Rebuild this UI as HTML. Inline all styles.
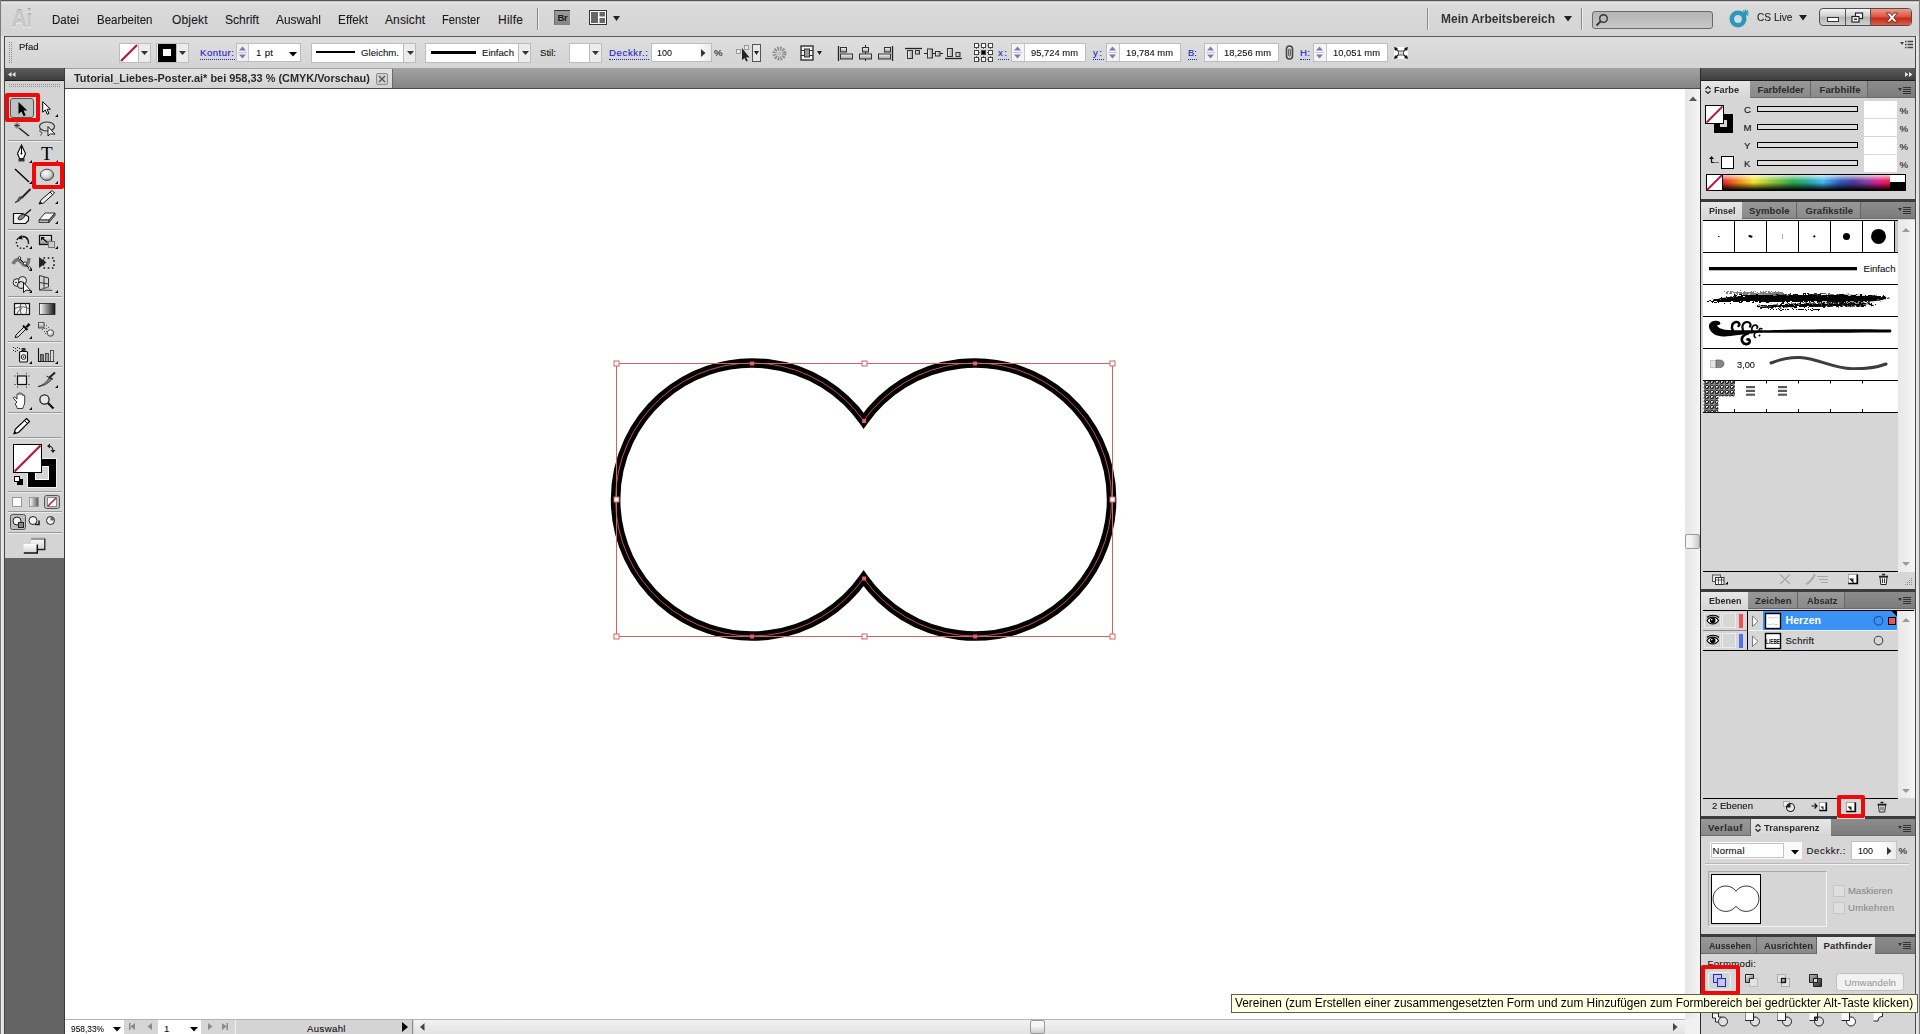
<!DOCTYPE html>
<html lang="de">
<head>
<meta charset="utf-8">
<title>Tutorial_Liebes-Poster.ai</title>
<style>
html,body{margin:0;padding:0}
body{width:1920px;height:1034px;position:relative;overflow:hidden;background:#d6d6d6;font-family:"Liberation Sans",sans-serif;font-size:11px;color:#111}
.a{position:absolute}
.t{position:absolute;white-space:nowrap;line-height:1;-webkit-text-stroke:.1px}
.t[style*="bold"]{-webkit-text-stroke:0}
svg{position:absolute;overflow:visible}
.menu .t{font-size:12.5px;top:14px;color:#1a1a1a}
.lbl{color:#2020c8;border-bottom:1px dotted #2020c8;padding-bottom:2px}
.inp{position:absolute;background:#fff;border:1px solid #bdbdbd;box-sizing:border-box}
.tab{position:absolute;font-weight:bold;font-size:10.5px;color:#2a2a2a;box-sizing:border-box}
.tabon{background:linear-gradient(#e6e6e6,#d6d6d6)}
.taboff{background:linear-gradient(#989898,#8a8a8a);border-right:1px solid #666;border-bottom:1px solid #6c6c6c}
.tabbar{position:absolute;background:linear-gradient(#8c8c8c,#7c7c7c);border-bottom:1px solid #6c6c6c;box-sizing:border-box}
.band{position:absolute;background:#3c3c3c}
.hl{position:absolute;z-index:5;border:4px solid #ee0a0a;border-radius:2px;box-sizing:border-box}
</style>
</head>
<body>
<div class="a" style="left:0;top:0;width:1920px;height:1px;background:#555"></div>
<div class="a" style="left:0;top:1px;width:1920px;height:35px;background:linear-gradient(#b8b8b8 0,#e6e6e6 1.500px,#dadada 4px,#d4d4d4)"></div>
<div class="a" style="left:0;top:36px;width:1920px;height:1px;background:#5a5a5a"></div>
<div class="a" style="left:0;top:37px;width:1920px;height:31px;background:linear-gradient(#dedede,#d4d4d4)"></div>
<div class="a" style="left:0;top:36px;width:1px;height:998px;background:#7a7a7a"></div>
<div class="a" style="left:1px;top:36px;width:3px;height:998px;background:linear-gradient(90deg,#ececec,#dcdcdc)"></div>
<div class="a" style="left:4px;top:36px;width:1px;height:998px;background:#484848"></div>
<div class="a" style="left:1915px;top:36px;width:1px;height:998px;background:#484848"></div>
<div class="a" style="left:1916px;top:36px;width:3px;height:998px;background:linear-gradient(90deg,#ececec,#dcdcdc)"></div>
<div class="a" style="left:1919px;top:36px;width:1px;height:998px;background:#7a7a7a"></div>
<div class="a" style="left:0;top:0;width:1px;height:36px;background:#7a7a7a"></div><div class="a" style="left:1919px;top:0;width:1px;height:36px;background:#7a7a7a"></div>

<div class="menu">
<span class="t" style="left:12px;font-size:24px;font-weight:bold;color:#c8c8c8;text-shadow:0 1px 0 #f0f0f0,0 -1px 0 #a6a6a6;transform:scaleX(0.833);transform-origin:0 0;top:7.2px">Ai</span>
<span class="t" style="left:52px;font-size:12px;transform:scaleX(0.964);transform-origin:0 0;top:13.8px">Datei</span>
<span class="t" style="left:97px;font-size:12px;transform:scaleX(0.956);transform-origin:0 0;top:13.8px">Bearbeiten</span>
<span class="t" style="left:172px;font-size:12px;letter-spacing:0.16px;top:13.8px">Objekt</span>
<span class="t" style="left:225px;font-size:12px;transform:scaleX(1.000);transform-origin:0 0;top:13.8px">Schrift</span>
<span class="t" style="left:276px;font-size:12px;transform:scaleX(0.992);transform-origin:0 0;top:13.8px">Auswahl</span>
<span class="t" style="left:338px;font-size:12px;transform:scaleX(0.985);transform-origin:0 0;top:13.8px">Effekt</span>
<span class="t" style="left:385px;font-size:12px;letter-spacing:0.11px;top:13.8px">Ansicht</span>
<span class="t" style="left:442px;font-size:12px;transform:scaleX(0.934);transform-origin:0 0;top:13.8px">Fenster</span>
<span class="t" style="left:498px;font-size:12px;letter-spacing:0.25px;top:13.8px">Hilfe</span>
<div class="a" style="left:537px;top:8px;width:1px;height:22px;background:#8a8a8a"></div>
<div class="a" style="left:538px;top:8px;width:1px;height:22px;background:#ececec"></div>
<div class="a" style="left:554px;top:10px;width:16px;height:15px;background:linear-gradient(#9a9a9a,#848484);border-top:1px solid #333;border-left:1px solid #707070;box-sizing:border-box"></div>
<span class="t" style="left:557.500px;top:12.500px;font-size:9.500px;font-weight:bold;color:#1a1a1a;letter-spacing:-.3px">Br</span>
<svg style="left:589px;top:10px" width="32" height="15" viewBox="0 0 32 15"><rect x="0.500" y="0.500" width="17" height="14" fill="#fff" stroke="#333"/><rect x="2" y="2" width="7" height="11" fill="#666"/><rect x="10.500" y="2" width="5.500" height="4.500" fill="#666"/><rect x="10.500" y="8" width="5.500" height="5" fill="#666"/><path d="M24 6h7l-3.500 5z" fill="#222"/></svg>
<div class="a" style="left:1427px;top:8px;width:1px;height:22px;background:#8a8a8a"></div>
<div class="a" style="left:1428px;top:8px;width:1px;height:22px;background:#ececec"></div>
<span class="t" style="left:1441px;font-size:13px;font-weight:bold;color:#333;transform:scaleX(0.921);transform-origin:0 0;top:12.0px">Mein Arbeitsbereich</span>
<svg style="left:1564px;top:16px" width="8" height="6"><path d="M0 0h8l-4 5.5z" fill="#222"/></svg>
<div class="a" style="left:1581px;top:8px;width:1px;height:22px;background:#8a8a8a"></div>
<div class="a" style="left:1582px;top:8px;width:1px;height:22px;background:#ececec"></div>
<div class="a" style="left:1592px;top:11px;width:121px;height:18px;background:linear-gradient(#b4b4b4,#c8c8c8);border:1px solid #6a6a6a;border-radius:3px;box-sizing:border-box"></div>
<svg style="left:1595px;top:13px" width="14" height="14" viewBox="0 0 14 14"><circle cx="8.5" cy="5.5" r="3.8" fill="none" stroke="#333" stroke-width="1.4"/><path d="M5.8 8.2L1.5 12.5" stroke="#333" stroke-width="1.8"/></svg>
<svg style="left:1729px;top:9px" width="22" height="19" viewBox="0 0 22 19"><circle cx="9" cy="10" r="6.2" fill="none" stroke="#2a97bb" stroke-width="4.6"/><circle cx="9" cy="10" r="2.6" fill="#bfe3ee"/><path d="M16.5 0.5v7M13 4h7M14 1.5l5 5M19 1.5l-5 5" stroke="#2a97bb" stroke-width="1.2"/></svg>
<span class="t" style="left:1757px;font-size:11.500px;color:#222;transform:scaleX(0.881);transform-origin:0 0;top:12.3px">CS Live</span>
<svg style="left:1799px;top:15px" width="8" height="6"><path d="M0 0h8l-4 5.5z" fill="#222"/></svg>
<div class="a" style="left:1819px;top:8px;width:93px;height:18px;border:1px solid #4e4e4e;border-radius:4px;box-sizing:border-box;background:linear-gradient(#f4f4f4,#d0d0d0 45%,#b4b4b4 50%,#d2d2d2);overflow:hidden">
<div class="a" style="left:25px;top:0;width:1px;height:18px;background:#555"></div>
<div class="a" style="left:50px;top:0;width:42px;height:18px;background:linear-gradient(#ee9a8a,#dc5040 45%,#c42a1a 50%,#e06a50);border-left:1px solid #555"></div>
<div class="a" style="left:7px;top:8px;width:10px;height:3px;background:#fff;border:1px solid #333"></div>
<svg style="left:31px;top:3px" width="13" height="11" viewBox="0 0 13 11"><rect x="4.5" y="1" width="7" height="5.5" fill="#fff" stroke="#222" stroke-width="1.2"/><rect x="1" y="4.5" width="7" height="5.5" fill="#fff" stroke="#222" stroke-width="1.2"/><rect x="3" y="6.5" width="3" height="1.5" fill="#333"/></svg>
<svg style="left:65px;top:3px" width="14" height="11" viewBox="0 0 14 11"><path d="M1.5 1h3.5l2 2.6 2-2.6h3.5l-3.7 4.5 3.7 4.5h-3.5l-2-2.6-2 2.6h-3.5l3.7-4.5z" fill="#fff" stroke="#5a2018" stroke-width="0.9"/></svg>
</div>
</div>

<div class="ctl">
<svg style="left:9px;top:42px" width="4" height="22"><defs><pattern id="gd2" width="2" height="2" patternUnits="userSpaceOnUse"><rect width="1" height="1" fill="#8e8e8e"/></pattern></defs><rect width="4" height="22" fill="url(#gd2)"/></svg>
<span class="t" style="left:19px;font-size:9.600px;transform:scaleX(0.987);transform-origin:0 0;top:41.9px">Pfad</span>
<!-- fill swatch -->
<div class="inp" style="left:119px;top:43px;width:32px;height:20px;background:#ececec"></div>
<div class="a" style="left:120px;top:44px;width:18px;height:18px;background:#fff;border-right:1px solid #bdbdbd"></div>
<svg style="left:120px;top:44px" width="18" height="18"><path d="M1 17L17 1" stroke="#c0103c" stroke-width="2.200"/></svg>
<svg style="left:141px;top:51px" width="7" height="4"><path d="M0 0h7l-3.5 4z" fill="#333"/></svg>
<!-- stroke swatch -->
<div class="inp" style="left:156px;top:43px;width:33px;height:20px;background:#ececec"></div>
<div class="a" style="left:158px;top:44px;width:18px;height:18px;background:#000"></div>
<div class="a" style="left:163px;top:49px;width:8px;height:7px;background:#fff"></div>
<div class="a" style="left:176px;top:44px;width:1px;height:18px;background:#bdbdbd"></div>
<svg style="left:179px;top:51px" width="7" height="4"><path d="M0 0h7l-3.5 4z" fill="#333"/></svg>
<span class="t lbl" style="left:200px;font-size:9.600px;letter-spacing:0.51px;top:47.9px">Kontur:</span>
<!-- spinner + 1pt -->
<div class="inp" style="left:236px;top:43px;width:65px;height:19px"></div>
<div class="a" style="left:237px;top:44px;width:11px;height:17px;background:#f0f0f0;border-right:1px solid #c8c8c8"></div>
<svg style="left:239px;top:46px" width="8" height="14"><path d="M0 4.500l3.500-4 3.500 4zM0 8.500h7l-3.500 4z" fill="#7a7abf"/><path d="M-1 6.5h9" stroke="#c8c8c8"/></svg>
<span class="t" style="left:256px;font-size:9.600px;letter-spacing:0.33px;top:47.9px">1 pt</span>
<svg style="left:289px;top:52px" width="8" height="5"><path d="M0 0h8l-4 4.5z" fill="#000"/></svg>
<!-- Gleichm -->
<div class="inp" style="left:311px;top:43px;width:105px;height:20px;background:#ececec"></div>
<div class="a" style="left:312px;top:44px;width:91px;height:18px;background:#fff;border-right:1px solid #bdbdbd"></div>
<div class="a" style="left:316px;top:51px;width:39px;height:2px;background:#000"></div>
<span class="t" style="left:361px;font-size:9.600px;letter-spacing:0.02px;top:47.9px">Gleichm.</span>
<svg style="left:407px;top:51px" width="7" height="4"><path d="M0 0h7l-3.5 4z" fill="#333"/></svg>
<!-- Einfach -->
<div class="inp" style="left:425px;top:43px;width:106px;height:20px;background:#ececec"></div>
<div class="a" style="left:426px;top:44px;width:92px;height:18px;background:#fff;border-right:1px solid #bdbdbd"></div>
<div class="a" style="left:431px;top:51px;width:45px;height:3px;background:#000"></div>
<span class="t" style="left:482px;font-size:9.600px;letter-spacing:0.00px;top:47.9px">Einfach</span>
<svg style="left:522px;top:51px" width="7" height="4"><path d="M0 0h7l-3.5 4z" fill="#333"/></svg>
<span class="t" style="left:540px;font-size:9.600px;letter-spacing:0.00px;top:47.9px">Stil:</span>
<div class="inp" style="left:569px;top:43px;width:33px;height:20px;background:#ececec"></div>
<div class="a" style="left:570px;top:44px;width:19px;height:18px;background:#fff;border-right:1px solid #bdbdbd"></div>
<svg style="left:592px;top:51px" width="7" height="4"><path d="M0 0h7l-3.5 4z" fill="#333"/></svg>
<span class="t lbl" style="left:609px;font-size:9.600px;letter-spacing:0.62px;top:47.9px">Deckkr.:</span>
<!-- 100 -->
<div class="inp" style="left:651px;top:43px;width:61px;height:19px"></div>
<div class="a" style="left:695px;top:44px;width:16px;height:17px;background:linear-gradient(90deg,#fff,#ececec)"></div>
<span class="t" style="left:657px;font-size:9.600px;transform:scaleX(0.937);transform-origin:0 0;top:47.9px">100</span>
<svg style="left:701px;top:49px" width="5" height="8"><path d="M0 0v8l4.5-4z" fill="#333"/></svg>
<span class="t" style="left:714px;font-size:9.600px;letter-spacing:0.47px;top:47.9px">%</span>
<!-- select similar -->
<svg style="left:735px;top:44px" width="27" height="18" viewBox="0 0 27 18"><rect x="1.5" y="5.5" width="4" height="4" fill="#e8e8e8" stroke="#555" stroke-dasharray="1 1"/><rect x="9.500" y="1.500" width="4" height="4" fill="#e8e8e8" stroke="#555" stroke-dasharray="1 1"/><path d="M7 4l7.500 9.500-3.500-.3 1.800 3.600-1.600.8-1.800-3.700-2.400 2.300z" fill="#222"/><rect x="17.5" y="0.5" width="8" height="17" fill="#e8e8e8" stroke="#555"/><path d="M19 7h5l-2.500 4z" fill="#222"/></svg>
<!-- recolor wheel -->
<svg style="left:772px;top:46px" width="15" height="15" viewBox="0 0 15 15"><circle cx="7.500" cy="7.500" r="5" fill="none" stroke="#8e8e8e" stroke-width="4" stroke-dasharray="1.600 1"/><circle cx="7.500" cy="7.500" r="2" fill="#bdbdbd"/></svg>
<!-- doc setup -->
<svg style="left:800px;top:45px" width="26" height="16" viewBox="0 0 26 16"><rect x="1" y="1" width="12" height="14" fill="#f4f4f4" stroke="#333" stroke-width="1.400"/><rect x="4.500" y="4" width="5" height="8" fill="#999" stroke="#333"/><path d="M1 5.500h3M10 5.500h3M1 10.500h3M10 10.500h3" stroke="#333"/><path d="M17 6h5l-2.500 4z" fill="#222"/></svg>
<!-- align icons -->
<svg style="left:837px;top:45px" width="128" height="16" viewBox="0 0 128 16"><defs><linearGradient id="ag" x1="0" y1="0" x2="0" y2="1"><stop offset="0" stop-color="#f6f6f6"/><stop offset="1" stop-color="#9c9c9c"/></linearGradient><linearGradient id="ah" x1="0" y1="0" x2="1" y2="0"><stop offset="0" stop-color="#f6f6f6"/><stop offset="1" stop-color="#9c9c9c"/></linearGradient></defs>
<g stroke="#333" fill="url(#ag)"><path d="M1.500 1v15" stroke="#222" stroke-width="1.300" fill="none"/><rect x="3.500" y="2.500" width="6" height="4.500"/><rect x="3.500" y="9" width="12" height="5"/>
<path d="M28.500 0v16" stroke="#222" fill="none"/><rect x="25.500" y="2.500" width="6" height="4.500"/><rect x="22.500" y="9" width="12" height="5"/>
<path d="M55.500 1v15" stroke="#222" stroke-width="1.300" fill="none"/><rect x="47.500" y="2.500" width="6" height="4.500"/><rect x="41.500" y="9" width="12" height="5"/></g>
<g stroke="#333" fill="url(#ah)"><path d="M68 3.500h17" stroke="#222" stroke-width="1.300" fill="none"/><rect x="70.500" y="5.500" width="5" height="8"/><rect x="78.500" y="5.500" width="4" height="3.500"/>
<path d="M87 8.500h19" stroke="#222" fill="none"/><rect x="90.500" y="4" width="5" height="9"/><rect x="98.500" y="6.500" width="4.500" height="4.500"/>
<path d="M108 13.500h17" stroke="#222" stroke-width="1.300" fill="none"/><rect x="110.500" y="3.500" width="5" height="8"/><rect x="119" y="7.500" width="4" height="4"/></g></svg>
<!-- reference point -->
<svg style="left:974px;top:43px" width="19" height="19" viewBox="0 0 19 19"><g fill="#fff" stroke="#444"><path d="M3 2.500h13M3 9.500h13M3 16.500h13M2.500 3v13M9.500 3v13M16.500 3v13" stroke="#666" stroke-dasharray="1 1" fill="none"/><rect x="0.500" y="0.500" width="4" height="4"/><rect x="7.500" y="0.500" width="4" height="4"/><rect x="14.500" y="0.500" width="4" height="4"/><rect x="0.500" y="7.500" width="4" height="4"/><rect x="7.500" y="7.500" width="4" height="4" fill="#000"/><rect x="14.500" y="7.500" width="4" height="4"/><rect x="0.500" y="14.500" width="4" height="4"/><rect x="7.500" y="14.500" width="4" height="4"/><rect x="14.500" y="14.500" width="4" height="4"/></g></svg>
<span class="t lbl" style="left:998px;font-size:9.600px;letter-spacing:1.53px;top:47.9px">x:</span>
<div class="inp" style="left:1011px;top:43px;width:75px;height:19px"></div>
<div class="a" style="left:1012px;top:44px;width:12px;height:17px;background:#f4f4f4;border-right:1px solid #c8c8c8"></div>
<svg style="left:1014px;top:46px" width="8" height="14"><path d="M0 4.500l3.500-4 3.500 4zM0 8.500h7l-3.500 4z" fill="#7a7abf"/><path d="M-1 6.500h9" stroke="#c8c8c8"/></svg>
<span class="t" style="left:1031px;font-size:9.600px;transform:scaleX(0.979);transform-origin:0 0;top:47.9px">95,724 mm</span>
<span class="t lbl" style="left:1093px;font-size:9.600px;letter-spacing:1.53px;top:47.9px">y:</span>
<div class="inp" style="left:1106px;top:43px;width:75px;height:19px"></div>
<div class="a" style="left:1107px;top:44px;width:12px;height:17px;background:#f4f4f4;border-right:1px solid #c8c8c8"></div>
<svg style="left:1109px;top:46px" width="8" height="14"><path d="M0 4.500l3.500-4 3.500 4zM0 8.500h7l-3.500 4z" fill="#7a7abf"/><path d="M-1 6.500h9" stroke="#c8c8c8"/></svg>
<span class="t" style="left:1126px;font-size:9.600px;transform:scaleX(0.979);transform-origin:0 0;top:47.9px">19,784 mm</span>
<span class="t lbl" style="left:1188px;font-size:9.600px;transform:scaleX(0.991);transform-origin:0 0;top:47.9px">B:</span>
<div class="inp" style="left:1204px;top:43px;width:75px;height:19px"></div>
<div class="a" style="left:1205px;top:44px;width:12px;height:17px;background:#f4f4f4;border-right:1px solid #c8c8c8"></div>
<svg style="left:1207px;top:46px" width="8" height="14"><path d="M0 4.500l3.500-4 3.500 4zM0 8.500h7l-3.500 4z" fill="#7a7abf"/><path d="M-1 6.500h9" stroke="#c8c8c8"/></svg>
<span class="t" style="left:1224px;font-size:9.600px;transform:scaleX(0.979);transform-origin:0 0;top:47.9px">18,256 mm</span>
<svg style="left:1285px;top:45px" width="9" height="15" viewBox="0 0 9 15"><rect x="1.500" y="1" width="6" height="13" rx="3" fill="none" stroke="#444" stroke-width="1.600"/><rect x="3.500" y="4" width="2" height="7" rx="1" fill="#bbb" stroke="#444" stroke-width=".8"/></svg>
<span class="t lbl" style="left:1300px;font-size:9.600px;letter-spacing:0.41px;top:47.9px">H:</span>
<div class="inp" style="left:1313px;top:43px;width:75px;height:19px"></div>
<div class="a" style="left:1314px;top:44px;width:12px;height:17px;background:#f4f4f4;border-right:1px solid #c8c8c8"></div>
<svg style="left:1316px;top:46px" width="8" height="14"><path d="M0 4.500l3.500-4 3.500 4zM0 8.500h7l-3.500 4z" fill="#7a7abf"/><path d="M-1 6.500h9" stroke="#c8c8c8"/></svg>
<span class="t" style="left:1333px;font-size:9.600px;transform:scaleX(0.979);transform-origin:0 0;top:47.9px">10,051 mm</span>
<svg style="left:1394px;top:47px" width="14" height="12" viewBox="0 0 14 12"><rect x="0" y="0" width="14" height="12" fill="#fff"/><rect x="4.500" y="4" width="5" height="4" fill="#ddd" stroke="#555"/><path d="M0 0l4 1-1 1 1.500 1.500-1 1L2 3 1 4zM14 0l-4 1 1 1-1.500 1.500 1 1L12 3l1 1zM0 12l4-1-1-1 1.500-1.500-1-1L2 9 1 8zM14 12l-4-1 1-1-1.500-1.500 1-1L12 9l1-1z" fill="#111"/></svg>
<svg style="left:1900px;top:40px" width="13" height="9" viewBox="0 0 13 9"><path d="M0 2h4l-2 3z" fill="#444"/><path d="M5 1.500h1.500M5 4.500h1.500M5 7.500h1.500" stroke="#444" stroke-width="1.600"/><path d="M7.500 1.500h5.500M7.500 4.500h5.500M7.500 7.500h5.500" stroke="#444" stroke-width="1.400"/></svg>
</div>

<div class="a" style="left:65px;top:68px;width:1635px;height:21px;background:linear-gradient(#a2a2a2,#848484);border-bottom:1px solid #4c4c4c;box-sizing:border-box"></div>
<div class="a" style="left:65px;top:69px;width:328px;height:19px;background:linear-gradient(#e4e4e4,#d2d2d2);border-right:1px solid #6a6a6a;box-sizing:border-box"></div>
<span class="t" style="left:74px;font-size:11.5px;color:#2a2a2a;font-weight:bold;transform:scaleX(0.950);transform-origin:0 0;top:73.0px">Tutorial_Liebes-Poster.ai* bei 958,33 % (CMYK/Vorschau)</span>
<svg style="left:376px;top:73px" width="12" height="12" viewBox="0 0 12 12"><rect x="0.500" y="0.500" width="11" height="11" rx="1.500" fill="#d0d0d0" stroke="#8a8a8a"/><path d="M3 3l6 6M9 3l-6 6" stroke="#555" stroke-width="1.300"/></svg>

<div class="a" style="left:5px;top:68px;width:59px;height:966px;background:#646464"></div>
<div class="a" style="left:64px;top:68px;width:1px;height:966px;background:#3a3a3a"></div>
<div class="a" style="left:5px;top:68px;width:59px;height:12px;background:linear-gradient(#5c5c5c,#3e3e3e)"></div>
<div class="a" style="left:5px;top:80px;width:59px;height:1px;background:#1e1e1e"></div>
<svg style="left:8px;top:72px" width="8" height="5"><path d="M3.500 0v5L0 2.500zM7.500 0v5L4 2.500z" fill="#e4e4e4"/></svg>
<div class="a" style="left:5px;top:81px;width:59px;height:477px;background:#d4d4d4"></div>
<svg style="left:9px;top:84px" width="52" height="4"><defs><pattern id="gd" width="2" height="2" patternUnits="userSpaceOnUse"><rect width="1" height="1" fill="#8e8e8e"/></pattern></defs><rect width="52" height="4" fill="url(#gd)"/></svg>
<svg style="left:5px;top:81px" width="59" height="477" viewBox="5 81 59 477">
<defs>
<linearGradient id="gv" x1="0" y1="0" x2="0" y2="1"><stop offset="0" stop-color="#fafafa"/><stop offset="1" stop-color="#8a8a8a"/></linearGradient>
<linearGradient id="gh" x1="0" y1="0" x2="1" y2="0"><stop offset="0" stop-color="#fff"/><stop offset="1" stop-color="#111"/></linearGradient>
<radialGradient id="gs" cx="0.4" cy="0.35" r="0.7"><stop offset="0" stop-color="#fff"/><stop offset="0.600" stop-color="#d0d0d0"/><stop offset="1" stop-color="#777"/></radialGradient>
</defs>
<!-- separators -->
<g stroke="#9a9a9a"><path d="M8 140.500h54M8 229.500h54M8 296.500h54M8 341.500h54M8 366.500h54M8 412.500h54M8 437.500h54M8 491.500h54M8 511.500h54M8 532.500h54"/></g>
<g stroke="#ececec"><path d="M8 141.500h54M8 230.500h54M8 297.500h54M8 342.500h54M8 367.500h54M8 413.500h54M8 438.500h54M8 492.500h54M8 512.500h54M8 533.500h54"/></g>
<!-- selected tool bg -->
<rect x="10.500" y="98.500" width="23" height="19" rx="2.500" fill="#bcc2c2" stroke="#555"/>
<!-- selection arrow -->
<path d="M18.500 102v12l3-2.600 2.200 4.800 2-.9-2.200-4.700 3.800-.2z" fill="#000"/>
<!-- direct selection -->
<path d="M42.700 101.700v10.500l2.600-2.200 2 4.300 1.700-.800-1.900-4.200 3.300-.200z" fill="#fff" stroke="#000" stroke-width="1"/>
<!-- small triangles -->
<g fill="#000"><path d="M58 114v3h-3zM32 160v3h-3zM58 160v3h-3zM32 181v3h-3zM58 181v3h-3zM58 201v3h-3zM58 221v3h-3zM32 246v3h-3zM58 246v3h-3zM32 268v3h-3zM32 290v3h-3zM58 290v3h-3zM32 336v3h-3zM32 361v3h-3zM58 361v3h-3zM58 385v3h-3zM32 407v3h-3z"/></g>
<!-- magic wand -->
<path d="M19 128l10 8" stroke="#222" stroke-width="1.600"/><path d="M17 122.500v6M14 125.500h6M15 123.500l4 4M19 123.500l-4 4" stroke="#333" stroke-width=".9"/>
<!-- lasso -->
<ellipse cx="47" cy="126.500" rx="7.500" ry="4.500" fill="none" stroke="#333" stroke-width="1.200"/><path d="M41 129c-2 1-1.500 3 0 3s1 2-.5 3.500" fill="none" stroke="#333" stroke-width="1"/><path d="M48 126.500v9.500l2.500-2.200 4.500.4z" fill="#fff" stroke="#000" stroke-width=".9"/>
<!-- pen -->
<path d="M21.500 145l4 8.500-2 5h-4l-2-5z" fill="#fff" stroke="#000" stroke-width="1.100"/><path d="M21.500 147v6" stroke="#000"/><circle cx="21.500" cy="153.500" r="1" fill="#000"/><rect x="18.500" y="158.500" width="6" height="3" fill="#333"/>
<!-- T -->
<text x="46.800" y="160" font-family="Liberation Serif,serif" font-size="19" text-anchor="middle" fill="#000">T</text>
<!-- line -->
<path d="M15 169l14 13" stroke="#000" stroke-width="1.400"/>
<!-- ellipse -->
<ellipse cx="47" cy="174.800" rx="6.600" ry="5.600" fill="url(#gs)" stroke="#444" stroke-width="1"/>
<!-- brush -->
<path d="M30.500 189l-9 9" stroke="#222" stroke-width="1.800"/><path d="M22 197c-1 3-4 5-7 5.500 2.500-1 3-3.500 4.500-5.500z" fill="#666" stroke="#222" stroke-width=".8"/>
<!-- pencil -->
<path d="M52 190.500l2.500 2.500-11 10-4.500 1 2-4z" fill="#f0f0f0" stroke="#111" stroke-width="1"/><path d="M50 192l2.500 2.500" stroke="#111"/><path d="M39 204l1.500-2.500 1.500 1.500z" fill="#111"/>
<!-- blob brush -->
<path d="M13.500 213.500h9l6 3v4l-3 3h-12z" fill="#f2f2f2" stroke="#111" stroke-width="1.200"/><path d="M31 209.500l-7 6" stroke="#111" stroke-width="1.300"/><ellipse cx="21.500" cy="217" rx="4" ry="2" transform="rotate(-35 21.500 217)" fill="#888" stroke="#111" stroke-width=".8"/>
<!-- eraser -->
<path d="M45 213h10l-6 7h-10z" fill="#fafafa" stroke="#222" stroke-width=".9"/><path d="M39 220h10v2.500h-10z" fill="#bbb" stroke="#222" stroke-width=".8"/><path d="M49 220l6-7v2.500l-6 7z" fill="#888" stroke="#222" stroke-width=".8"/>
<!-- rotate -->
<circle cx="22.500" cy="242.500" r="6" fill="none" stroke="#111" stroke-width="1.500" stroke-dasharray="1.500 2"/><path d="M22.500 236.500a6 6 0 0 1 5.800 4.500" fill="none" stroke="#111" stroke-width="1.400"/><path d="M17 238.500l5-3.500.5 4.500z" fill="#111"/>
<!-- scale -->
<rect x="39.500" y="235.500" width="12" height="9" fill="url(#gv)" stroke="#111" stroke-width="1.200"/><rect x="48.500" y="241.500" width="6" height="6" fill="#ccc" stroke="#777"/><path d="M41.500 237.500l6 5" stroke="#000" stroke-width="1.200"/><path d="M41 237h4l-4 3.500z" fill="#000"/>
<!-- width/warp -->
<path d="M13 264c3-6 6-5 9-1s6 4 7-5" fill="none" stroke="#777" stroke-width="3.500"/><path d="M19 258l11 11" stroke="#111" stroke-width="1"/><circle cx="19.500" cy="258" r="1.300" fill="#fff" stroke="#111" stroke-width=".8"/><circle cx="25" cy="263.500" r="1.600" fill="#fff" stroke="#111" stroke-width=".8"/><circle cx="29.500" cy="268" r="1.300" fill="#fff" stroke="#111" stroke-width=".8"/>
<!-- free transform -->
<rect x="43.500" y="258" width="10.500" height="10" fill="none" stroke="#111" stroke-width="1.500" stroke-dasharray="1.600 2.600"/><path d="M39 257v11l7.500-5.500z" fill="#222"/>
<!-- shape builder -->
<circle cx="17" cy="282.500" r="3.800" fill="#eee" stroke="#222"/><circle cx="22.500" cy="280.500" r="4" fill="#e4e4e4" stroke="#222"/><circle cx="21" cy="285" r="3.500" fill="#ddd" stroke="#222"/><circle cx="16" cy="282.500" r=".8"/><circle cx="19" cy="282.500" r=".8"/><path d="M23.500 282.500v10l2.600-2.300 4.600.4z" fill="#fff" stroke="#000" stroke-width=".9"/>
<!-- perspective grid -->
<path d="M39.500 275.500v14.500l12.500.5M39.500 275.500l9 2.500v9M44 277v11M39.500 282.500l9 1.500M39.500 290l9-3" fill="none" stroke="#333" stroke-width="1"/><path d="M48.500 287l5 3.500h-14z" fill="#aaa" opacity=".6"/>
<!-- mesh -->
<rect x="14.500" y="303.500" width="15" height="11" fill="#f2f2f2" stroke="#111" stroke-width="1.200"/><path d="M14.500 309c4-3 10-3 15 0M21 303.500c-1.500 4-1 8 .5 11M25 303.500c2 3 2 7 1 11M17 314c1-3 3-5 5-5.500" fill="none" stroke="#333" stroke-width=".8"/>
<!-- gradient -->
<rect x="39.500" y="303.500" width="15.500" height="11" fill="url(#gh)" stroke="#222" stroke-width=".8"/>
<!-- eyedropper -->
<path d="M15 337.500l1-2.500 8-8 2 2-8 8z" fill="#ddd" stroke="#111" stroke-width="1"/><path d="M23 325.500l4.500 4.500" stroke="#111" stroke-width="2"/><path d="M25.500 326.500l3-3.500 2 2-3.500 3z" fill="#111"/>
<!-- blend -->
<rect x="38.500" y="322.500" width="5.500" height="5.500" fill="url(#gv)" stroke="#555"/><circle cx="50.500" cy="333" r="3.300" fill="url(#gs)" stroke="#555"/><g fill="#555"><rect x="44" y="324" width="1" height="1"/><rect x="46" y="325" width="1" height="1"/><rect x="42" y="329" width="1" height="1"/><rect x="44" y="328" width="1" height="1"/><rect x="46" y="328" width="1" height="1"/><rect x="44" y="331" width="1" height="1"/><rect x="46" y="331" width="1" height="1"/><rect x="48" y="327" width="1" height="1"/><rect x="45" y="333" width="1" height="1"/></g>
<!-- symbol sprayer -->
<rect x="19.500" y="351.500" width="8" height="10.500" rx="1" fill="#eee" stroke="#111" stroke-width="1.100"/><rect x="21.500" y="348" width="4" height="3" fill="#333"/><circle cx="23.500" cy="357" r="2.300" fill="#fff" stroke="#111"/><circle cx="23.500" cy="357" r=".8"/><g fill="#222"><rect x="13" y="347" width="1" height="1"/><rect x="15" y="348" width="1" height="1"/><rect x="17" y="347" width="1" height="1"/><rect x="13" y="350" width="1" height="1"/><rect x="15" y="351" width="1" height="1"/><rect x="17" y="350" width="1" height="1"/><rect x="19" y="348" width="1" height="1"/></g>
<!-- graph -->
<path d="M38.500 348v13.500h16" fill="none" stroke="#111" stroke-width="1.100"/><rect x="40.500" y="354.500" width="3" height="7" fill="#777" stroke="#222" stroke-width=".7"/><rect x="45.500" y="353.500" width="3" height="8" fill="#999" stroke="#222" stroke-width=".7"/><rect x="50.500" y="350.500" width="3" height="11" fill="#ddd" stroke="#222" stroke-width=".7"/>
<!-- artboard -->
<rect x="17.500" y="376" width="9" height="8.500" fill="#e8e8e8" stroke="#111" stroke-width="1.200"/><path d="M14 376h2M28 376h2M14 384.500h2M28 384.500h2M17.500 372.500v2M26.500 372.500v2M17.500 386v2M26.500 386v2" stroke="#666" stroke-width=".9"/>
<!-- slice -->
<path d="M38 386.500c5-1 9-5 11.500-9l3 1c-3 4-8 7.500-14.500 8z" fill="#888" stroke="#222" stroke-width=".8"/><path d="M49 378l6-5.500" stroke="#222" stroke-width="2"/><path d="M46.500 376l6 3.500" stroke="#222" stroke-width="1"/>
<!-- hand -->
<path d="M17 402l-3.500-3.500c-.8-1 .5-2 1.500-1.200l2 1.800v-4.500c0-1.200 1.800-1.200 1.900 0v-1c0-1.300 1.900-1.300 2 0v1c0-1.200 1.900-1.200 2 0v1.200c.1-1.100 1.800-1 1.800.2v6c0 3-1.500 4-2 6.500h-5.500c-.3-2-1-3-2-4.500z" fill="#fff" stroke="#222" stroke-width=".9"/>
<!-- zoom -->
<circle cx="44.500" cy="399.500" r="4.600" fill="#e6e6e6" stroke="#222" stroke-width="1.300"/><path d="M48 403l5.500 5.500" stroke="#111" stroke-width="2.200"/>
<!-- crayon -->
<path d="M26.500 418.500l3 3-11 11-4.500 1.200 1.300-4.400z" fill="#fff" stroke="#000" stroke-width="1.200"/><path d="M24.500 420.500l3 3" stroke="#000"/><path d="M14 433.700l.8-2.700 1.900 1.900z" fill="#000"/>
<!-- fill / stroke -->
<rect x="27.500" y="458.500" width="29" height="29" fill="#000" stroke="#f0f0f0"/><rect x="35.500" y="466.500" width="13" height="13" fill="#d4d4d4" stroke="#fff"/>
<rect x="13.500" y="444.500" width="28" height="28" fill="#fff" stroke="#000" stroke-width="1"/><path d="M14.500 471.500l26-26" stroke="#c0103c" stroke-width="2.200"/>
<path d="M48 446c3 0 5 2 5 5" fill="none" stroke="#222" stroke-width="1.100"/><path d="M47 446l3-2.500v5zM53 453l-2.500-3h5z" fill="#222"/>
<rect x="17.500" y="479.500" width="5" height="5" fill="#000" stroke="#000"/><rect x="14.500" y="476.500" width="5" height="5" fill="#fff" stroke="#000"/>
<!-- color mode buttons -->
<rect x="12.500" y="497.500" width="9" height="9" fill="#fff" stroke="#999"/><rect x="29.500" y="497.500" width="9" height="9" fill="url(#gh2)" stroke="#999"/>
<linearGradient id="gh2" x1="0" y1="0" x2="1" y2="0"><stop offset="0" stop-color="#fff"/><stop offset="1" stop-color="#555"/></linearGradient>
<rect x="44.500" y="495.500" width="15" height="13" rx="2" fill="#c4c4c4" stroke="#555"/><rect x="47.500" y="497.500" width="9" height="9" fill="#fff" stroke="#888"/><path d="M48 506l8-8" stroke="#c0103c" stroke-width="1.500"/>
<!-- draw modes -->
<rect x="10.500" y="514.500" width="15" height="15" rx="2" fill="#bcbcbc" stroke="#555"/><circle cx="17" cy="521" r="4" fill="#f2f2f2" stroke="#222"/><rect x="18.500" y="522.500" width="5" height="5" fill="#888" stroke="#222"/>
<circle cx="33" cy="520.500" r="4" fill="#f2f2f2" stroke="#222"/><path d="M35 524.500h4v-4" fill="none" stroke="#222" stroke-width="1.600"/>
<circle cx="50.500" cy="520.500" r="4" fill="#f2f2f2" stroke="#222"/><path d="M50.500 520.500v-4a4 4 0 0 1 4 4z" fill="#666"/>
<!-- screen mode -->
<linearGradient id="gv2" x1="0" y1="0" x2="0" y2="1"><stop offset="0" stop-color="#fff"/><stop offset="1" stop-color="#d4d4d4"/></linearGradient><rect x="31" y="537.500" width="13.500" height="11.500" fill="url(#gv2)"/><rect x="31" y="537.500" width="13.500" height="2.500" fill="#9a9a9a"/><path d="M44.800 538.500v11h-7" fill="none" stroke="#222" stroke-width="1.300"/><rect x="23.500" y="544" width="13.500" height="8.500" fill="url(#gv2)"/><path d="M37.300 544.500v8.500h-13.500" fill="none" stroke="#111" stroke-width="1.500"/>
</svg>
<!-- red highlights -->
<div class="hl" style="left:4.500px;top:93px;width:35.500px;height:29px"></div>
<div class="hl" style="left:32px;top:162px;width:32px;height:27px"></div>

<div class="a" style="left:65px;top:89px;width:1620px;height:930px;background:#fff"></div>
<!-- vertical scrollbar -->
<div class="a" style="left:1685px;top:89px;width:15px;height:945px;background:linear-gradient(90deg,#e6e6e6,#f4f4f4)"></div>
<svg style="left:1689px;top:96px" width="8" height="5"><path d="M0 5l4-4.500 4 4.500z" fill="#555"/></svg>
<div class="a" style="left:1685px;top:534px;width:15px;height:15px;box-sizing:border-box;border:1px solid #9a9a9a;border-radius:2px;background:linear-gradient(90deg,#f4f4f4 40%,#c8c8c8)"></div>
<div class="a" style="left:1700px;top:68px;width:1px;height:966px;background:#2a2a2a"></div>
<!-- artwork -->
<svg style="left:0;top:0" width="1920" height="1034" viewBox="0 0 1920 1034">
<path d="M864 420.760A136.500 136.500 0 1 0 864 578.240A136.500 136.500 0 1 0 864 420.760Z" fill="none" stroke="#000" stroke-width="9.600" stroke-miterlimit="10" transform="translate(-.4 0)"/>
<path d="M864 420.760A136.500 136.500 0 1 0 864 578.240A136.500 136.500 0 1 0 864 420.760Z" fill="none" stroke="#f06470" stroke-width=".8" transform="translate(-.4 0)"/>
<rect x="616.500" y="363.500" width="496" height="273" fill="none" stroke="#d06464" stroke-width="1"/>
<g fill="#f25a62" transform="translate(-.4 0)"><rect x="750.500" y="361.500" width="4" height="4"/><rect x="973.500" y="361.500" width="4" height="4"/><rect x="750.500" y="634.500" width="4" height="4"/><rect x="973.500" y="634.500" width="4" height="4"/><rect x="862.500" y="419" width="4" height="4"/><rect x="862.500" y="576.500" width="4" height="4"/></g>
<g fill="#fff" stroke="#d06464"><rect x="614" y="361" width="5" height="5"/><rect x="862" y="361" width="5" height="5"/><rect x="1110" y="361" width="5" height="5"/><rect x="614" y="497" width="5" height="5"/><rect x="1110" y="497" width="5" height="5"/><rect x="614" y="634" width="5" height="5"/><rect x="862" y="634" width="5" height="5"/><rect x="1110" y="634" width="5" height="5"/></g>
</svg>

<div class="a" style="left:65px;top:1019px;width:1620px;height:15px;background:#d6d6d6;border-top:1px solid #b4b4b4;box-sizing:border-box"></div>
<div class="a" style="left:65px;top:1020px;width:59px;height:14px;background:#fff"></div>
<span class="t" style="left:71px;font-size:9.600px;transform:scaleX(0.871);transform-origin:0 0;top:1023.9px">958,33%</span>
<svg style="left:113px;top:1027px" width="8" height="5"><path d="M0 0h8l-4 4.500z" fill="#000"/></svg>
<svg style="left:129px;top:1023px" width="100" height="7" viewBox="0 0 100 9" preserveAspectRatio="none"><g fill="#8a8a8a"><path d="M0 0h1.500v9H0zM6 0v9L1.500 4.500z"/><path d="M23 0v9l-4.500-4.500z"/><path d="M79 0v9l4.500-4.500z"/><path d="M93 0v9l4.500-4.500zM97.500 0H99v9h-1.500z"/></g></svg>
<div class="a" style="left:158px;top:1020px;width:43px;height:14px;background:#fff"></div>
<span class="t" style="left:164px;font-size:9.600px;top:1023.9px">1</span>
<svg style="left:190px;top:1027px" width="8" height="5"><path d="M0 0h8l-4 4.500z" fill="#000"/></svg>
<div class="a" style="left:235px;top:1020px;width:178px;height:14px;background:#d4d4d4;border-left:1px solid #eee;border-right:1px solid #8a8a8a;box-sizing:border-box"></div>
<span class="t" style="left:307px;font-size:9.600px;letter-spacing:0.37px;top:1023.9px">Auswahl</span>
<svg style="left:402px;top:1022px" width="6" height="10"><path d="M0 0v10l6-5z" fill="#000"/></svg>
<div class="a" style="left:414px;top:1020px;width:1271px;height:14px;background:linear-gradient(#f2f2f2,#e2e2e2)"></div>
<svg style="left:420px;top:1023px" width="5" height="8"><path d="M4.500 0v8L0 4z" fill="#444"/></svg>
<svg style="left:1673px;top:1023px" width="5" height="8"><path d="M0 0v8l4.500-4z" fill="#444"/></svg>
<div class="a" style="left:1030px;top:1020px;width:15px;height:14px;box-sizing:border-box;border:1px solid #9a9a9a;border-radius:2px;background:linear-gradient(#f6f6f6 40%,#cdcdcd)"></div>
<div class="a" style="left:1685px;top:1019px;width:15px;height:15px;background:#f0f0f0"></div>

<div class="a" style="left:1701px;top:68px;width:214px;height:966px;background:#d6d6d6"></div>
<div class="a" style="left:1701px;top:68px;width:214px;height:12px;background:linear-gradient(#5c5c5c,#3e3e3e)"></div>
<div class="a" style="left:1701px;top:80px;width:214px;height:1px;background:#1e1e1e"></div>
<svg style="left:1905px;top:72px" width="8" height="5"><path d="M0 0v5l3.500-2.500zM4 0v5l3.500-2.500z" fill="#e4e4e4"/></svg>
<!-- ===== Farbe ===== -->
<div class="tabbar" style="left:1701px;top:81px;width:214px;height:17px"></div>
<div class="tab tabon" style="left:1701px;top:81px;width:49px;height:17px"></div>
<div class="tab taboff" style="left:1750px;top:81px;width:61px;height:17px"></div>
<div class="tab taboff" style="left:1811px;top:81px;width:57px;height:17px"></div>
<svg style="left:1705px;top:86px" width="6" height="8"><path d="M.500 3L3 .500 5.500 3M.500 5L3 7.500 5.500 5" fill="none" stroke="#222" stroke-width="1.200"/></svg>
<span class="t" style="left:1713.500px;font-size:9.500px;font-weight:bold;color:#2a2a2a;transform:scaleX(0.966);transform-origin:0 0;top:85.0px">Farbe</span>
<span class="t" style="left:1757.500px;font-size:9.500px;font-weight:bold;color:#2a2a2a;letter-spacing:0.00px;top:85.0px">Farbfelder</span>
<span class="t" style="left:1819.500px;font-size:9.500px;font-weight:bold;color:#2a2a2a;letter-spacing:0.11px;top:85.0px">Farbhilfe</span>
<svg class="pm" style="left:1898px;top:87px" width="13" height="7" viewBox="0 0 13 7"><path d="M0 1h4l-2 3z" fill="#333"/><path d="M5 .500h8M5 2.500h8M5 4.500h8M5 6.500h8" stroke="#333" stroke-width="1"/></svg>
<!-- fill/stroke -->
<div class="a" style="left:1714px;top:114px;width:19px;height:19px;background:#000"></div>
<div class="a" style="left:1720px;top:120px;width:7px;height:7px;background:#d6d6d6"></div>
<div class="a" style="left:1705px;top:105px;width:19px;height:19px;background:#fff;border:1px solid #000;box-sizing:border-box"></div>
<svg style="left:1705px;top:105px" width="19" height="19"><path d="M1.500 17.500l16-16" stroke="#c0103c" stroke-width="1.800"/></svg>
<svg style="left:1709px;top:156px" width="10" height="8" viewBox="0 0 10 8"><path d="M2.500 1v5.500h3" fill="none" stroke="#111" stroke-width="1.200"/><path d="M0 3l2.500-3L5 3z" fill="#111"/><path d="M6.500 6.500h1M8.500 6.500h1" stroke="#111"/></svg>
<div class="a" style="left:1721px;top:156px;width:13px;height:13px;background:#fff;border:1px solid #000;box-sizing:border-box"></div>
<span class="t" style="left:1744px;font-size:9.600px;top:104.9px">C</span>
<span class="t" style="left:1743.500px;font-size:9.600px;top:122.9px">M</span>
<span class="t" style="left:1744px;font-size:9.600px;top:140.9px">Y</span>
<span class="t" style="left:1744px;font-size:9.600px;top:158.9px">K</span>
<div class="a" style="left:1757px;top:106px;width:101px;height:6px;border:1px solid #000;background:#dcdcdc;box-sizing:border-box"></div>
<div class="a" style="left:1757px;top:124px;width:101px;height:6px;border:1px solid #000;background:#dcdcdc;box-sizing:border-box"></div>
<div class="a" style="left:1757px;top:142px;width:101px;height:6px;border:1px solid #000;background:#dcdcdc;box-sizing:border-box"></div>
<div class="a" style="left:1757px;top:160px;width:101px;height:6px;border:1px solid #000;background:#dcdcdc;box-sizing:border-box"></div>
<div class="a" style="left:1864px;top:101px;width:33px;height:17px;background:#fff"></div>
<div class="a" style="left:1864px;top:119px;width:33px;height:17px;background:#fff"></div>
<div class="a" style="left:1864px;top:137px;width:33px;height:17px;background:#fff"></div>
<div class="a" style="left:1864px;top:155px;width:33px;height:17px;background:#fff"></div>
<span class="t" style="left:1899.500px;font-size:9.600px;top:105.9px">%</span>
<span class="t" style="left:1899.500px;font-size:9.600px;top:123.9px">%</span>
<span class="t" style="left:1899.500px;font-size:9.600px;top:141.9px">%</span>
<span class="t" style="left:1899.500px;font-size:9.600px;top:159.9px">%</span>
<!-- spectrum -->
<div class="a" style="left:1706px;top:174px;width:200px;height:17px;background:#000"></div>
<div class="a" style="left:1707px;top:175px;width:15px;height:15px;background:#fff"></div>
<svg style="left:1707px;top:175px" width="15" height="15"><path d="M0 15L15 0" stroke="#c0103c" stroke-width="1.800"/></svg>
<div class="a" style="left:1722px;top:175px;width:168px;height:15px;background:linear-gradient(90deg,#e8202a 0%,#f08a1e 10%,#f5e52a 19%,#8cc63e 30%,#2fa84a 42%,#26a9a0 52%,#46b8f0 60%,#2c5fc0 70%,#4b3a9c 78%,#8a3aa0 86%,#e0208c 93%,#e81e3a 100%)"></div>
<div class="a" style="left:1722px;top:175px;width:168px;height:15px;background:linear-gradient(rgba(255,255,255,.75) 0%,rgba(255,255,255,0) 40%,rgba(0,0,0,0) 50%,rgba(0,0,0,.95) 100%)"></div>
<div class="a" style="left:1890px;top:175px;width:15px;height:7px;background:#fff"></div><div class="a" style="left:1722px;top:175px;width:1px;height:15px;background:#000"></div>
<div class="band" style="left:1701px;top:199px;width:214px;height:3px"></div>
<!-- ===== Pinsel ===== -->
<div class="tabbar" style="left:1701px;top:202px;width:214px;height:17px"></div>
<div class="tab tabon" style="left:1701px;top:202px;width:41px;height:17px"></div>
<div class="tab taboff" style="left:1742px;top:202px;width:55px;height:17px"></div>
<div class="tab taboff" style="left:1797px;top:202px;width:64px;height:17px"></div>
<span class="t" style="left:1708.500px;font-size:9.500px;font-weight:bold;color:#2a2a2a;transform:scaleX(0.946);transform-origin:0 0;top:206.0px">Pinsel</span>
<span class="t" style="left:1749px;font-size:9.500px;font-weight:bold;color:#2a2a2a;letter-spacing:0.15px;top:206.0px">Symbole</span>
<span class="t" style="left:1805.500px;font-size:9.500px;font-weight:bold;color:#2a2a2a;letter-spacing:0.10px;top:206.0px">Grafikstile</span>
<svg class="pm" style="left:1898px;top:207px" width="13" height="7" viewBox="0 0 13 7"><path d="M0 1h4l-2 3z" fill="#333"/><path d="M5 .500h8M5 2.500h8M5 4.500h8M5 6.500h8" stroke="#333" stroke-width="1"/></svg>
<div class="a" style="left:1703px;top:221px;width:195px;height:191px;background:#fff"></div>
<div class="a" style="left:1895px;top:221px;width:3px;height:31px;background:#c8c8c8"></div>
<div class="a" style="left:1898px;top:220px;width:17px;height:352px;background:linear-gradient(90deg,#e8e8e8,#f4f4f4)"></div>
<svg style="left:1902px;top:228px" width="8" height="4"><path d="M0 4l4-4 4 4z" fill="#9a9a9a"/></svg>
<svg style="left:1902px;top:562px" width="8" height="4"><path d="M0 0h8l-4 4z" fill="#9a9a9a"/></svg>
<svg style="left:1703px;top:220px" width="196" height="193" viewBox="1703 220 196 193">
<defs><filter id="rough" x="-5%" y="-50%" width="110%" height="200%"><feTurbulence type="fractalNoise" baseFrequency="0.35 0.9" numOctaves="2" seed="4" result="n"/><feDisplacementMap in="SourceGraphic" in2="n" scale="5.500" xChannelSelector="R" yChannelSelector="G"/></filter><filter id="soft"><feGaussianBlur stdDeviation=".7"/></filter></defs>
<g stroke="#000" stroke-width="1" fill="none"><path d="M1703 220.500h195M1703 252.500h195M1703 284.500h195M1703 316.500h195M1703 348.500h195M1703 380.500h195M1703 412.500h195"/><path d="M1734.500 220v32M1766.500 220v32M1798.500 220v32M1830.500 220v32M1862.500 220v32M1894.500 220v32M1734.500 380v3.500M1766.500 380v3.500M1798.500 380v3.500M1830.500 380v3.500M1862.500 380v3.500M1734.500 409v3.500M1766.500 409v3.500M1798.500 409v3.500M1830.500 409v3.500M1862.500 409v3.500"/></g>
<rect x="1718" y="236" width="1.500" height="1" fill="#000"/>
<ellipse cx="1750.500" cy="236.300" rx="2.200" ry="1.200" transform="rotate(15 1750.500 236.300)" fill="#000"/>
<path d="M1782.500 234v5" stroke="#999" stroke-width=".8"/>
<path d="M1814.300 235l1.300 1.400-1.300 1.400-1.300-1.400z" fill="#000"/>
<circle cx="1846.500" cy="236.400" r="3.500" fill="#000"/>
<circle cx="1878.500" cy="236.400" r="7.500" fill="#000"/>
<rect x="1709" y="267" width="148" height="3.300" fill="#000"/>
<!-- charcoal -->
<g filter="url(#rough)" fill="#000"><path d="M1708 300.500L1740 295L1800 294L1870 295L1893 297.500L1880 300.500L1862 302.500L1800 302L1740 302L1708 302z"/><path d="M1755 306L1790 303.500L1860 303L1878 304.500L1862 306.500L1800 307L1760 308z"/><path d="M1725 292.500h60v1h-60zM1770 309h50v1h-50z"/></g>
<!-- flourish -->
<path d="M1760 330.300c30-.800 90-1.300 130-.700a1.400 1.400 0 0 1 0 2.800c-40 .200-95 .200-130 .400z" fill="#000"/>
<path d="M1762 330.300L1745 330.200C1735 330.200 1727 330.500 1722 329C1718 327.800 1716.500 326 1717.500 324.800C1719 325.500 1720.800 324.500 1720.300 322.800C1719.800 321 1717 320.300 1714 321C1710.500 321.800 1708.500 324 1709 327C1709.800 331.500 1714 335.500 1721 336.300C1729 337.200 1738 334.500 1762 332.600Z" fill="#000"/>
<g fill="none" stroke="#000" stroke-linecap="round"><path d="M1733 330.500c-2.500-4-.5-8 3-8.500 3-.400 4.500 2.500 2.500 4" stroke-width="2.400"/><path d="M1743 330.500c-2-4.500.5-8.500 4-8.500 3 0 4.500 2.500 3 4.500" stroke-width="2.200"/><path d="M1752 330.500c-1-3 1-5.500 3.500-5.300 2 .200 2.500 2 1.500 3" stroke-width="1.800"/><path d="M1759 330c.5-1.500 2-2 3-1.200" stroke-width="1.500"/>
<path d="M1748 333.500c-5 1-7.500 5-5.500 8.500 1.500 2.500 5.500 3 7 .500 1-1.800-.5-3.500-2-3" stroke-width="2.600"/><path d="M1755 333.500c-1.500 1.500-1 3.500.5 4" stroke-width="1.600"/></g>
<circle cx="1759.500" cy="335.500" r="1" fill="#000"/>
<!-- bristle -->
<rect x="1710.500" y="360.500" width="6" height="7" fill="#e4e4e4" stroke="#c4c4c4"/><path d="M1716 360h3.500c3 0 4.500 1.800 4.500 3.800s-1.500 3.800-4.500 3.800H1716z" fill="#858585" stroke="#5a5a5a" stroke-width=".700"/>
<path d="M1771 363C1781 359 1790 357 1800 357.500C1818 358.500 1832 368 1852 368.800C1866 369 1878 367 1886 364" fill="none" stroke="#3c3c3c" stroke-width="3" stroke-linecap="round" filter="url(#soft)"/>
<!-- pattern brush -->
<defs><pattern id="orn" width="5" height="5" patternUnits="userSpaceOnUse"><rect width="5" height="5" fill="#8a8a8a"/><circle cx="2" cy="2" r="1.700" fill="#eee" stroke="#111" stroke-width=".900"/><path d="M0 4.500l5-4" stroke="#222" stroke-width=".800"/></pattern></defs>
<path d="M1704 381h30.500v15H1718v16h-14z" fill="url(#orn)"/>
<path d="M1704 381h30.500v15H1718v16h-14z" fill="none" stroke="#333" stroke-width=".800" stroke-dasharray="2 1.500"/>
<g fill="#5a5a5a"><rect x="1746" y="386" width="9" height="2.200"/><rect x="1746" y="389.800" width="9" height="2.200"/><rect x="1746" y="393.600" width="9" height="2.200"/><rect x="1778" y="386" width="9" height="2.200"/><rect x="1778" y="389.800" width="9" height="2.200"/><rect x="1778" y="393.600" width="9" height="2.200"/></g>
</svg>
<span class="t" style="left:1863.500px;font-size:9.600px;letter-spacing:0.00px;top:263.9px">Einfach</span>
<span class="t" style="left:1737px;font-size:9.600px;transform:scaleX(0.963);transform-origin:0 0;top:359.7px">3,00</span>
<div class="a" style="left:1703px;top:571px;width:195px;height:1px;background:#000"></div>
<!-- Pinsel footer icons -->
<svg style="left:1703px;top:572px" width="212" height="17" viewBox="1703 572 212 17">
<rect x="1712.500" y="575" width="8" height="6.500" fill="#e8e8e8" stroke="#555"/><rect x="1715.500" y="577.500" width="8.500" height="7" fill="#fff" stroke="#333"/><path d="M1715.500 580h8.500M1718.500 577.500v7M1721.500 577.500v7" stroke="#333" stroke-width=".8"/><path d="M1728 581.500v3h-3z" fill="#000"/>
<path d="M1780 574.500l10 9.500M1790 574.500l-10 9.500" stroke="#a8a8a8" stroke-width="1.300"/>
<path d="M1806 584c4-1 6-5 9-9.500" fill="none" stroke="#a8a8a8" stroke-width="2"/><path d="M1817 576.500h11M1819 579.500h9M1821 582.500h7" stroke="#a8a8a8" stroke-width="1.100"/>
<rect x="1848.500" y="574.500" width="9" height="9" fill="#fff" stroke="#9a9a9a" stroke-width=".800"/><path d="M1857.300 574.500v9h-9" fill="none" stroke="#000" stroke-width="1.700"/><path d="M1849.500 578.500h4v4.500z" fill="#222"/><path d="M1849.500 578.500l4 4.500" stroke="#222" stroke-width="1"/>
<path d="M1880 577h7l-.800 7.500h-5.400z" fill="#f4f4f4" stroke="#222"/><path d="M1879 576.500h9M1882 574.500h3" stroke="#222" stroke-width="1.300"/><path d="M1882.500 578.500v4.500M1884.500 578.500v4.500" stroke="#222" stroke-width=".9"/>
<g fill="#8a8a8a"><rect x="1911" y="578" width="1" height="1"/><rect x="1909" y="580" width="1" height="1"/><rect x="1911" y="580" width="1" height="1"/><rect x="1907" y="582" width="1" height="1"/><rect x="1909" y="582" width="1" height="1"/><rect x="1911" y="582" width="1" height="1"/><rect x="1905" y="584" width="1" height="1"/><rect x="1907" y="584" width="1" height="1"/><rect x="1909" y="584" width="1" height="1"/><rect x="1911" y="584" width="1" height="1"/></g>
</svg>
<div class="band" style="left:1701px;top:589px;width:214px;height:3px"></div>
<!-- ===== Ebenen ===== -->
<div class="tabbar" style="left:1701px;top:592px;width:214px;height:17px"></div>
<div class="tab tabon" style="left:1701px;top:592px;width:47px;height:17px"></div>
<div class="tab taboff" style="left:1748px;top:592px;width:50px;height:17px"></div>
<div class="tab taboff" style="left:1798px;top:592px;width:47px;height:17px"></div>
<span class="t" style="left:1708.500px;font-size:9.500px;font-weight:bold;color:#2a2a2a;transform:scaleX(0.947);transform-origin:0 0;top:596.0px">Ebenen</span>
<span class="t" style="left:1755px;font-size:9.500px;font-weight:bold;color:#2a2a2a;letter-spacing:0.10px;top:596.0px">Zeichen</span>
<span class="t" style="left:1806.500px;font-size:9.500px;font-weight:bold;color:#2a2a2a;transform:scaleX(0.979);transform-origin:0 0;top:596.0px">Absatz</span>
<svg class="pm" style="left:1898px;top:597px" width="13" height="7" viewBox="0 0 13 7"><path d="M0 1h4l-2 3z" fill="#333"/><path d="M5 .500h8M5 2.500h8M5 4.500h8M5 6.500h8" stroke="#333" stroke-width="1"/></svg>
<div class="a" style="left:1703px;top:610px;width:211px;height:1px;background:#000"></div>
<div class="a" style="left:1763px;top:611px;width:134px;height:20px;background:#3a92f4"></div>
<div class="a" style="left:1703px;top:650px;width:195px;height:1px;background:#000"></div>
<div class="a" style="left:1747px;top:610px;width:1px;height:41px;background:#000"></div>
<div class="a" style="left:1703px;top:630px;width:44px;height:1px;background:#8a8a8a"></div>
<div class="a" style="left:1748px;top:630px;width:149px;height:1px;background:#eaf4ff"></div>
<div class="a" style="left:1898px;top:611px;width:17px;height:187px;background:linear-gradient(90deg,#e8e8e8,#f4f4f4)"></div>
<svg style="left:1902px;top:618px" width="8" height="4"><path d="M0 4l4-4 4 4z" fill="#9a9a9a"/></svg>
<svg style="left:1902px;top:789px" width="8" height="4"><path d="M0 0h8l-4 4z" fill="#9a9a9a"/></svg>
<svg style="left:1703px;top:611px" width="195" height="40" viewBox="1703 611 195 40">
<g><rect x="1704.500" y="613.500" width="16" height="14" fill="#d2d2d2" stroke="#e8e8e8"/><rect x="1722.500" y="613.500" width="13" height="14" fill="#d6d6d6" stroke="#ececec"/>
<path d="M1707 620.500c2.500-4.500 9-4.500 11.500 0-2.500 4.500-9 4.500-11.500 0z" fill="#fff" stroke="#000" stroke-width="1.100"/><circle cx="1712.700" cy="620.500" r="2.800" fill="#000"/><circle cx="1711.800" cy="619.600" r=".8" fill="#fff"/><path d="M1707 617.500c3-3 9-3 12 0" fill="none" stroke="#000" stroke-width="1.200"/>
<path d="M1752.500 616v10.500l5.500-5.200z" fill="#fff" stroke="#7a7a7a" stroke-width="1"/></g><g transform="translate(0 20)"><rect x="1704.500" y="613.500" width="16" height="14" fill="#d2d2d2" stroke="#e8e8e8"/><rect x="1722.500" y="613.500" width="13" height="14" fill="#d6d6d6" stroke="#ececec"/>
<path d="M1707 620.500c2.500-4.500 9-4.500 11.500 0-2.500 4.500-9 4.500-11.500 0z" fill="#fff" stroke="#000" stroke-width="1.100"/><circle cx="1712.700" cy="620.500" r="2.800" fill="#000"/><circle cx="1711.800" cy="619.600" r=".8" fill="#fff"/><path d="M1707 617.500c3-3 9-3 12 0" fill="none" stroke="#000" stroke-width="1.200"/>
<path d="M1752.500 616v10.500l5.500-5.200z" fill="#fff" stroke="#7a7a7a" stroke-width="1"/></g>
<rect x="1739" y="614" width="4" height="14" fill="#ee5050"/><rect x="1739" y="634" width="4" height="14" fill="#5070ee"/>
<rect x="1765.500" y="613.500" width="15" height="15" fill="#fff" stroke="#000" stroke-width="1.400"/><path d="M1768 617.500h3.500l1.500 1 1.500-1h3.500M1768 624.500h3.500l1.500-1 1.500 1h3.500" fill="none" stroke="#c8c8c8" stroke-width=".8"/>
<rect x="1765.500" y="633.500" width="15" height="15" fill="#fff" stroke="#000" stroke-width="1.400"/>
<text x="1766" y="644" font-family="Liberation Sans,sans-serif" font-size="7.500" font-weight="bold" fill="#111" textLength="14" lengthAdjust="spacingAndGlyphs">LIEBE</text>
<circle cx="1878.500" cy="620.800" r="4.300" fill="none" stroke="#1e4e92" stroke-width="1.100"/><circle cx="1878.500" cy="640.600" r="4.300" fill="none" stroke="#4a4a4a" stroke-width="1.100"/>
<rect x="1888.500" y="617.500" width="7" height="7" fill="#f05252" stroke="#000"/><path d="M1891.500 611h5.500v5.500z" fill="#000"/>
</svg>
<span class="t" style="left:1785.500px;font-size:10.500px;font-weight:bold;color:#fff;letter-spacing:0.10px;top:615.1px">Herzen</span>
<span class="t" style="left:1785.500px;font-size:9.600px;letter-spacing:0.22px;top:635.9px">Schrift</span>
<div class="a" style="left:1703px;top:798px;width:195px;height:1px;background:#000"></div>
<span class="t" style="left:1712px;font-size:9.600px;transform:scaleX(0.998);transform-origin:0 0;top:800.9px">2 Ebenen</span>
<svg style="left:1703px;top:799px" width="212" height="17" viewBox="1703 799 212 17">
<rect x="1783.500" y="801.500" width="6" height="5" fill="#eee" stroke="#777" stroke-dasharray="1 1"/><circle cx="1790.500" cy="807.500" r="4" fill="#e8e8e8" stroke="#222" stroke-width="1.100"/><path d="M1790.500 807.500v-4a4 4 0 0 0-4 4z" fill="#222"/>
<path d="M1811.500 806h5M1814.500 803.500l2.500 2.500-2.500 2.500" fill="none" stroke="#111" stroke-width="1.200"/><rect x="1819.500" y="802.500" width="7" height="8" fill="#fff" stroke="#9a9a9a" stroke-width=".800"/><path d="M1826.300 802.500v8h-7" fill="none" stroke="#000" stroke-width="1.600"/><path d="M1820.500 806.500h3v3.500z" fill="#222"/>
<rect x="1846.500" y="802.500" width="9" height="9" fill="#fff" stroke="#9a9a9a" stroke-width=".800"/><path d="M1855.300 802.500v9h-9" fill="none" stroke="#000" stroke-width="1.700"/><path d="M1847.500 806.500h4v4.500z" fill="#222"/>
<path d="M1878.500 805h7l-.800 7h-5.400z" fill="#f4f4f4" stroke="#222"/><path d="M1877.500 804.500h9M1880.500 802.500h3" stroke="#222" stroke-width="1.300"/><path d="M1881 806.500v4M1883 806.500v4" stroke="#222" stroke-width=".9"/>
</svg>
<div class="hl" style="left:1837px;top:795px;width:28px;height:23px"></div>
<div class="band" style="left:1701px;top:816px;width:136px;height:3px"></div><div class="band" style="left:1865px;top:816px;width:50px;height:3px"></div>
<!-- ===== Transparenz ===== -->
<div class="tabbar" style="left:1701px;top:819px;width:214px;height:17px"></div>
<div class="tab taboff" style="left:1701px;top:819px;width:50px;height:17px"></div>
<div class="tab tabon" style="left:1751px;top:819px;width:80px;height:17px"></div>
<span class="t" style="left:1708px;font-size:9.500px;font-weight:bold;color:#2a2a2a;letter-spacing:0.47px;top:822.5px">Verlauf</span>
<svg style="left:1755px;top:824px" width="6" height="8"><path d="M.500 3L3 .500 5.500 3M.500 5L3 7.500 5.500 5" fill="none" stroke="#222" stroke-width="1.200"/></svg>
<span class="t" style="left:1763.500px;font-size:9.500px;font-weight:bold;color:#2a2a2a;transform:scaleX(0.992);transform-origin:0 0;top:822.5px">Transparenz</span>
<svg class="pm" style="left:1898px;top:825px" width="13" height="7" viewBox="0 0 13 7"><path d="M0 1h4l-2 3z" fill="#333"/><path d="M5 .500h8M5 2.500h8M5 4.500h8M5 6.500h8" stroke="#333" stroke-width="1"/></svg>
<div class="a" style="left:1710px;top:842px;width:92px;height:17px;background:#fafafa"></div>
<div class="inp" style="left:1711px;top:843px;width:73px;height:15px;border-color:#c4c4c4"></div>
<span class="t" style="left:1712.500px;font-size:9.600px;letter-spacing:0.22px;top:846.2px">Normal</span>
<svg style="left:1791px;top:850px" width="8" height="5"><path d="M0 0h8l-4 4.500z" fill="#000"/></svg>
<span class="t" style="left:1806.500px;font-size:9.600px;letter-spacing:0.62px;top:846.2px">Deckkr.:</span>
<div class="inp" style="left:1851px;top:841px;width:46px;height:19px;border-color:#c4c4c4"></div>
<div class="a" style="left:1880px;top:842px;width:16px;height:17px;background:linear-gradient(90deg,#fff,#ebebeb)"></div>
<span class="t" style="left:1857.500px;font-size:9.600px;transform:scaleX(0.937);transform-origin:0 0;top:846.2px">100</span>
<svg style="left:1887px;top:847px" width="5" height="8"><path d="M0 0v8l4.500-4z" fill="#333"/></svg>
<span class="t" style="left:1898.500px;font-size:9.600px;letter-spacing:0.47px;top:846.2px">%</span>
<div class="a" style="left:1705px;top:863px;width:204px;height:1px;background:#b8b8b8"></div>
<div class="a" style="left:1705px;top:864px;width:204px;height:1px;background:#f2f2f2"></div>
<div class="a" style="left:1708px;top:871px;width:119px;height:56px;box-sizing:border-box;border:1px solid;border-color:#a8a8a8 #f4f4f4 #f4f4f4 #a8a8a8"></div>
<div class="a" style="left:1711px;top:874px;width:50px;height:50px;box-sizing:border-box;border:1px solid #000;background:#fff"></div>
<svg style="left:1711px;top:874px" width="50" height="50" viewBox="1711 874 50 50"><path d="M1736 891.200A12.700 12.700 0 1 0 1736 906.200A12.700 12.700 0 1 0 1736 891.200Z" fill="none" stroke="#333" stroke-width="1"/></svg>
<div class="a" style="left:1833px;top:885px;width:12px;height:12px;box-sizing:border-box;border:1px solid #c4c4c4;background:#dedede"></div>
<div class="a" style="left:1833px;top:902px;width:12px;height:12px;box-sizing:border-box;border:1px solid #c4c4c4;background:#dedede"></div>
<span class="t" style="left:1848px;font-size:9.600px;color:#8a8a8a;letter-spacing:0.03px;top:885.9px">Maskieren</span>
<span class="t" style="left:1848px;font-size:9.600px;color:#8a8a8a;letter-spacing:0.25px;top:902.9px">Umkehren</span>
<div class="band" style="left:1701px;top:934px;width:214px;height:3px"></div>
<!-- ===== Pathfinder ===== -->
<div class="tabbar" style="left:1701px;top:937px;width:214px;height:17px"></div>
<div class="tab taboff" style="left:1701px;top:937px;width:56px;height:17px"></div>
<div class="tab taboff" style="left:1757px;top:937px;width:60px;height:17px"></div>
<div class="tab tabon" style="left:1817px;top:937px;width:58px;height:17px"></div>
<span class="t" style="left:1708.500px;font-size:9.500px;font-weight:bold;color:#2a2a2a;transform:scaleX(0.925);transform-origin:0 0;top:940.5px">Aussehen</span>
<span class="t" style="left:1763.500px;font-size:9.500px;font-weight:bold;color:#2a2a2a;transform:scaleX(0.987);transform-origin:0 0;top:940.5px">Ausrichten</span>
<span class="t" style="left:1823.500px;font-size:9.500px;font-weight:bold;color:#2a2a2a;letter-spacing:0.17px;top:940.5px">Pathfinder</span>
<svg class="pm" style="left:1898px;top:942px" width="13" height="7" viewBox="0 0 13 7"><path d="M0 1h4l-2 3z" fill="#333"/><path d="M5 .500h8M5 2.500h8M5 4.500h8M5 6.500h8" stroke="#333" stroke-width="1"/></svg>
<span class="t" style="left:1707.500px;font-size:9.600px;letter-spacing:0.33px;top:958.9px">Formmodi:</span>
<svg style="left:1701px;top:960px" width="215" height="74" viewBox="1701 960 215 74">
<defs><linearGradient id="pg" x1="0" y1="0" x2="1" y2="1"><stop offset="0" stop-color="#fff"/><stop offset="1" stop-color="#555"/></linearGradient><linearGradient id="pg2" x1="0" y1="0" x2="1" y2="1"><stop offset="0" stop-color="#bbb"/><stop offset="1" stop-color="#222"/></linearGradient></defs>
<rect x="1708.500" y="972.500" width="22" height="17" rx="2.500" fill="#cfd6d6" stroke="#f0f0f0"/>
<rect x="1713.500" y="974.500" width="8" height="8" fill="#c4c4fa" stroke="#2c2ca8"/><rect x="1717.500" y="978.500" width="8" height="8" fill="#c4c4fa" stroke="#2c2ca8"/>
<rect x="1749.500" y="978.500" width="8" height="8" fill="#e2e2e2" stroke="#bbb"/><path d="M1745.500 974.500h8v4h-4v4h-4z" fill="url(#pg)" stroke="#222"/>
<rect x="1777.500" y="974.500" width="8" height="8" fill="#e4e4e4" stroke="#aaa"/><rect x="1781.500" y="978.500" width="8" height="8" fill="#e4e4e4" stroke="#aaa"/><rect x="1781.500" y="978.500" width="4" height="4" fill="url(#pg)" stroke="#111" stroke-width="1.300"/>
<path d="M1809.500 974.500h8v4h4v8h-8v-4h-4z" fill="url(#pg2)" stroke="#222"/><rect x="1813.500" y="978.500" width="4" height="4" fill="#d6d6d6" stroke="#222"/>
<rect x="1836.500" y="973.500" width="67" height="17" rx="3" fill="#f2f2f2" stroke="#c0c0c0"/>
<!-- bottom row -->
<g stroke="#222" fill="#f6f6f6"><path d="M1712.500 1013h6v4h3v5h-6v-4h-3z"/><circle cx="1723" cy="1021.500" r="4.500" fill="#e0e0e0"/>
<rect x="1745.500" y="1012.500" width="8" height="8"/><circle cx="1755" cy="1021.500" r="4.500" fill="#e0e0e0"/><rect x="1745.500" y="1012.500" width="8" height="8" fill="#fafafa" stroke="none"/><path d="M1745.500 1020.500h8v-8" fill="none"/>
<rect x="1777.500" y="1012.500" width="8" height="8"/><circle cx="1787" cy="1021.500" r="4.500" fill="#e0e0e0"/><rect x="1777.500" y="1012.500" width="8" height="8" fill="#fafafa" stroke="none"/><path d="M1777.500 1020.500h8v-8" fill="none"/>
<circle cx="1819" cy="1021.500" r="4.500" fill="#e0e0e0"/><rect x="1809.500" y="1012.500" width="8" height="8" fill="#fafafa" stroke="none"/><path d="M1809.500 1020.500h8v-8" fill="none"/><path d="M1814.500 1020.500v-3.500h3z" fill="#444"/>
<circle cx="1851" cy="1021.500" r="4.500" fill="#fff"/><rect x="1841.500" y="1012.500" width="8" height="8" fill="#fafafa" stroke="none"/><path d="M1841.500 1020.500h8v-8" fill="none"/>
<path d="M1873.500 1012.500h9v4c-3 0-4.500 1.500-4.500 4.500h-4.500z" fill="#fafafa" stroke="none"/><path d="M1873.500 1021h4.500c0-3 1.500-4.500 4.500-4.500v-4" fill="none"/></g>
</svg>
<span class="t" style="left:1844.500px;font-size:9.600px;color:#9a9a9a;letter-spacing:0.10px;top:977.9px">Umwandeln</span>
<div class="hl" style="left:1701px;top:965px;width:39px;height:30px"></div>


<div class="a" style="left:1231px;top:994px;width:687px;height:19px;box-sizing:border-box;border:1px solid #5c5c52;background:#ffffe1"></div>
<span class="t" style="left:1235px;font-size:12px;color:#000;-webkit-text-stroke:0;transform:scaleX(0.989);transform-origin:0 0;top:996.8px">Vereinen (zum Erstellen einer zusammengesetzten Form und zum Hinzufügen zum Formbereich bei gedrückter Alt-Taste klicken)</span>

</body>
</html>
